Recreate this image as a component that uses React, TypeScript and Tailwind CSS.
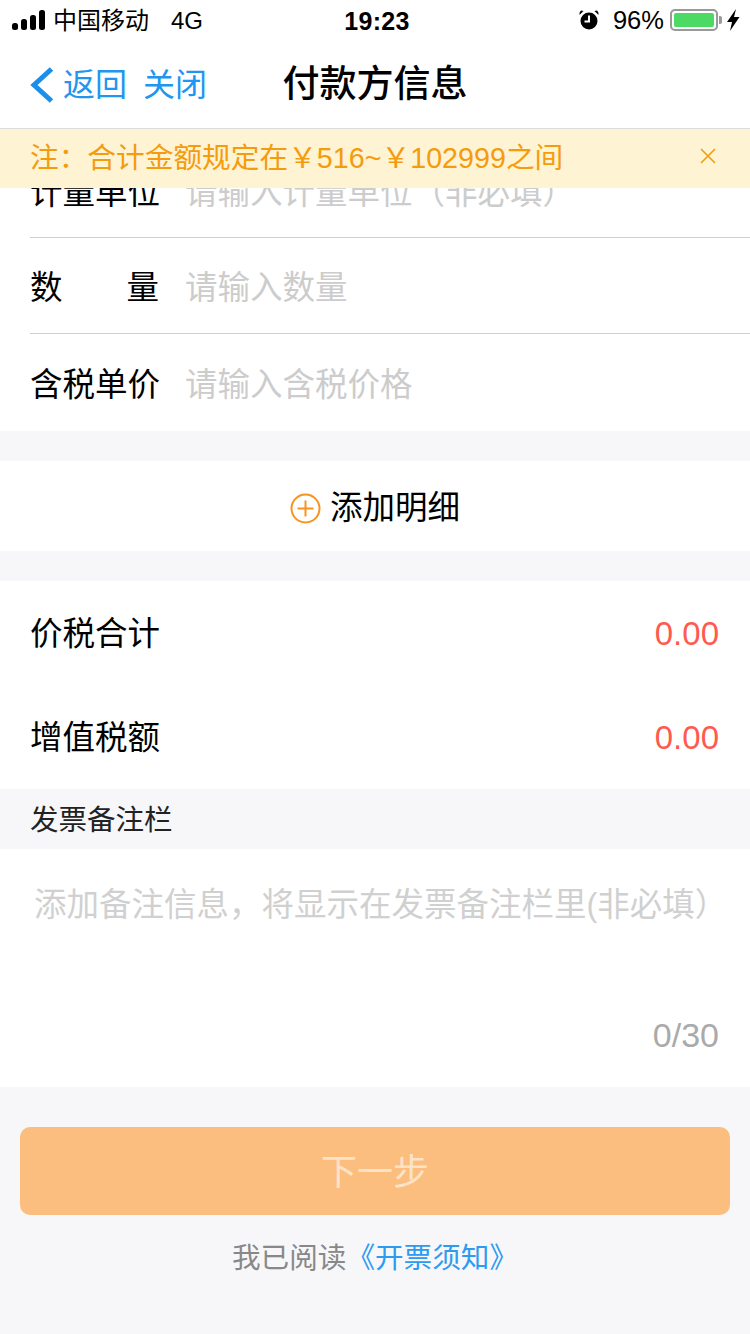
import React from "react";

const FONT = "font-['Liberation_Sans','Noto_Sans_CJK_SC',sans-serif]";

function StatusBar() {
  return (
    <div className="flex h-10 items-center justify-between pl-3 pr-[10px] text-[24px] text-black">
      <div className="flex w-[260px] items-center">
        <svg width="34" height="20" viewBox="0 0 34 20" fill="#000">
          <rect x="0" y="13" width="6" height="7" rx="2.5" />
          <rect x="9" y="9" width="6" height="11" rx="2.5" />
          <rect x="18" y="5" width="6" height="15" rx="2.5" />
          <rect x="27" y="0" width="6" height="20" rx="2.5" />
        </svg>
        <span className="ml-[7px] pt-[2px] leading-none">中国移动</span>
        <span className="ml-[22px] pt-[2px] leading-none">4G</span>
      </div>
      <span className="ml-[2px] pt-[2px] text-[25px] font-semibold leading-none tracking-[0.3px]">19:23</span>
      <div className="flex w-[260px] items-center justify-end">
        <svg width="22" height="22" viewBox="0 0 22 22" fill="#000">
          <circle cx="11" cy="12" r="8.5" />
          <path d="M1.5 6 L5.5 2 L3 1.5 Q1 3 1.5 6Z M20.5 6 L16.5 2 L19 1.5 Q21 3 20.5 6Z" />
          <path d="M11 6.5 V12.5 H6.5" stroke="#fff" strokeWidth="2" fill="none" />
        </svg>
        <span className="ml-[13px] pt-[1px] text-[25.5px] leading-none">96%</span>
        <div className="ml-[6px] h-[22px] w-[48px] rounded-[5px] border-2 border-[#999] p-[2px]">
          <div className="h-full w-full rounded-[2px] bg-[#4cd964]" />
        </div>
        <div className="ml-[1px] h-2 w-[3px] rounded-r-[2px] bg-[#999]" />
        <svg className="ml-[5px]" width="13" height="22" viewBox="0 0 13 22" fill="#000">
          <path d="M9 0 L0 13 H5 L3 22 L12.5 8 H7 Z" />
        </svg>
      </div>
    </div>
  );
}

function NavBar() {
  return (
    <div className="relative flex h-[89px] items-center justify-center border-b border-[#dcdcdc]">
      <div className="absolute left-[30px] top-[27px] flex items-center text-[32px] leading-none text-[#2196f0]">
        <svg width="24" height="36" viewBox="0 0 24 36" fill="none" stroke="#1b8fec" strokeWidth="5">
          <path d="M21.5 2 L4 18 L21.5 34" />
        </svg>
        <span className="ml-[9px]">返回</span>
        <span className="ml-[16px]">关闭</span>
      </div>
      <span className="pt-[1px] text-[37px] font-medium leading-none text-black">付款方信息</span>
    </div>
  );
}

function Notice() {
  return (
    <div className="absolute left-0 right-0 top-[129px] flex h-[59px] items-center justify-between bg-[#fef3d3] pl-[30px] pr-[33px] text-[28.7px] text-[#f39c0d]">
      <span className="leading-none">注：合计金额规定在￥516~￥102999之间</span>
      <svg className="mb-[6px]" width="18" height="18" viewBox="0 0 18 18" stroke="#f39c0d" strokeWidth="1.6">
        <path d="M2 2 L16 16 M16 2 L2 16" />
      </svg>
    </div>
  );
}

function FormRow({ label, placeholder, last, className }: { label: React.ReactNode; placeholder: string; last?: boolean; className?: string }) {
  return (
    <div className={`flex items-center ${last ? "" : "border-b border-[#cfcfcf]"} ${className}`}>
      <div className="w-[155px] text-[32.5px] leading-none text-black">{label}</div>
      <div className="text-[32.5px] leading-none text-[#cccccc]">{placeholder}</div>
    </div>
  );
}

function AmountRow({ label }: { label: string }) {
  return (
    <div className="flex h-[104px] items-center justify-between pl-[30px] pr-[31px]">
      <span className="pt-[3px] text-[32.5px] leading-none text-black">{label}</span>
      <span className="text-[33px] leading-none text-[#ff5a50]">0.00</span>
    </div>
  );
}

export default function App() {
  return (
    <div className={`relative flex h-[1334px] w-[750px] flex-col overflow-hidden bg-[#f7f7f9] ${FONT}`}>
      <div className="bg-white">
        <StatusBar />
        <NavBar />
      </div>

      <div className="bg-white pl-[30px]">
        <FormRow className="h-[109px] pt-[20px]" label="计量单位" placeholder="请输入计量单位（非必填）" />
        <FormRow
          className="h-[96px] pt-[6px]"
          label={
            <span className="flex w-[129px] justify-between">
              <span>数</span>
              <span>量</span>
            </span>
          }
          placeholder="请输入数量"
        />
        <FormRow className="h-[97px] pt-[6px]" label="含税单价" placeholder="请输入含税价格" last />
      </div>

      <div className="mt-[30px] flex h-[90px] items-center justify-center bg-white">
        <svg className="mt-[5px]" width="31" height="31" viewBox="0 0 31 31" fill="none" stroke="#f7931e" strokeWidth="2">
          <circle cx="15.5" cy="15.5" r="14" />
          <path d="M7.5 15.5 H23.5 M15.5 7.5 V23.5" />
        </svg>
        <span className="ml-[9px] pt-[5px] text-[32.5px] leading-none text-black">添加明细</span>
      </div>

      <div className="mt-[30px] bg-white">
        <AmountRow label="价税合计" />
        <AmountRow label="增值税额" />
      </div>

      <div className="flex h-[60px] items-center pl-[30px] pt-[3px] text-[28.5px] leading-none text-[#222]">发票备注栏</div>

      <div className="flex h-[238px] flex-col justify-between bg-white pb-[35px] pl-[34px] pr-[31px] pt-[40px]">
        <div className="whitespace-nowrap text-[32.5px] leading-none text-[#d0d0d0]">添加备注信息，将显示在发票备注栏里(非必填）</div>
        <div className="text-right text-[34px] leading-none text-[#aaaaaa]">0/30</div>
      </div>

      <div className="mx-5 mt-10 flex h-[88px] items-center justify-center rounded-[10px] bg-[#fbbe7f] pt-[3px] text-[36px] leading-none text-[#fde3c6]">
        下一步
      </div>

      <div className="mt-[29px] text-center text-[28.6px] leading-none text-[#888]">
        我已阅读<span className="text-[#2e9bf0]">《开票须知》</span>
      </div>

      <Notice />
    </div>
  );
}
